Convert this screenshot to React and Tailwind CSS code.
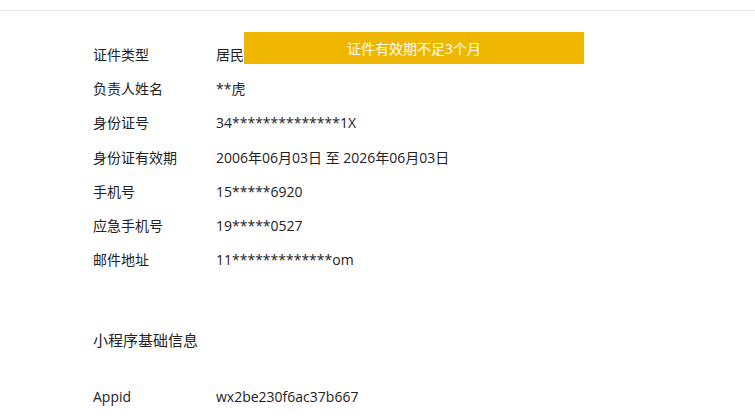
import React from 'react';

const rows = [
    { label: '证件类型', value: '居民身份证' },
    { label: '负责人姓名', value: '**虎' },
    { label: '身份证号', value: '34**************1X' },
    { label: '身份证有效期', value: '2006年06月03日 至 2026年06月03日' },
    { label: '手机号', value: '15*****6920' },
    { label: '应急手机号', value: '19*****0527' },
    { label: '邮件地址', value: '11*************om' },
];

const font = { fontFamily: '"Segoe UI", "Open Sans", "Noto Sans CJK SC", sans-serif' };

const App = () => {
    return (
        <div className="relative w-[755px] h-[420px] overflow-hidden bg-white text-[#222]" style={font}>
            {/* top divider */}
            <div className="h-[11px] border-b border-[#e6e6e6]" />

            <div className="pl-[93px] pt-[26px]">
                {rows.map((row, i) => (
                    <div key={i} className="flex items-center h-[34.3px] text-[14px]">
                        <span className="w-[123px]">{row.label}</span>
                        <span>{row.value}</span>
                    </div>
                ))}

                <h3 className="mt-[53px] text-[15px] leading-[20px]">小程序基础信息</h3>

                <div className="flex items-center mt-[36px] h-[20px] text-[14px]">
                    <span className="w-[123px]">Appid</span>
                    <span>wx2be230f6ac37b667</span>
                </div>
            </div>

            {/* toast */}
            <div className="absolute left-[244px] top-[32px] w-[340px] h-[32px] bg-[#efb600] text-white text-[14px] flex items-center justify-center">
                证件有效期不足3个月
            </div>
        </div>
    );
};

export default App;
